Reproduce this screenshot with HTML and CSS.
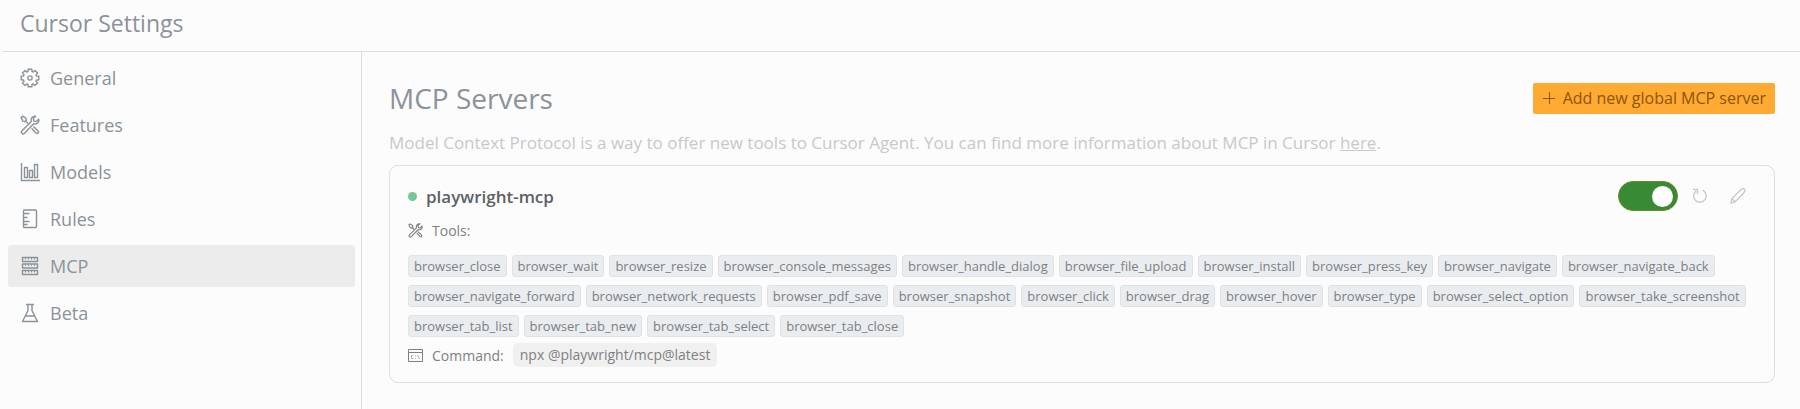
FILE: index.html
```html
<!DOCTYPE html>
<html lang="en">
<head>
    <meta charset="UTF-8">
    <meta name="viewport" content="width=device-width, initial-scale=1.0">
    <title>Cursor Settings</title>
    <link rel="stylesheet" href="styles.css">
</head>
<body>
    <header class="header">
        <h1>Cursor Settings</h1>
    </header>

    <div class="layout">
        <nav class="sidebar">
            <a href="#general" class="nav-item">
                <svg class="nav-icon" viewBox="0 0 20 20">
                    <path d="M8.1 1.2h3.8L12 3.5l1.2.5 1.7-1.55 2.65 2.65L16 6.8l.5 1.2 2.3.1v3.8l-2.3.1-.5 1.2 1.55 1.7-2.65 2.65L13.2 16l-1.2.5-.1 2.3H8.1L8 16.5 6.8 16l-1.7 1.55-2.65-2.65L4 13.2 3.5 12l-2.3-.1V8.1L3.5 8 4 6.8 2.45 5.1 5.1 2.45 6.8 4 8 3.5z"></path>
                    <circle cx="10" cy="10" r="2.1"></circle>
                </svg>
                <span>General</span>
            </a>
            <a href="#features" class="nav-item">
                <svg class="nav-icon" viewBox="0 0 20 20">
                    <path d="M15.7 1.2l-2.3 2.3.4 2.6 2.6.4 2.3-2.3c.7 2.6-1.2 4.8-3.5 4.8-.6 0-1-.1-1.5-.3L4.5 18.2c-.8.8-1.9.8-2.6.1-.7-.7-.7-1.8.1-2.6l9.3-9.2c-.9-3 1.5-5.8 4.4-5.3z"></path>
                    <path d="M1.2 2.6l1.4-1.4 3.2 1.9.6 2-1.6 1.6-2-.6zM5.7 6l2.8 2.8M11.6 13.3l4.5 4.8c.6.6 1.5.5 2 0s.6-1.4 0-2l-4.7-4.6"></path>
                </svg>
                <span>Features</span>
            </a>
            <a href="#models" class="nav-item">
                <svg class="nav-icon" viewBox="0 0 20 20">
                    <path d="M1.5 1v17.5H20M4.5 5.5h3v10h-3zM9.5 8.5h3v7h-3zM14.5 2.5h3v13h-3z"></path>
                </svg>
                <span>Models</span>
            </a>
            <a href="#rules" class="nav-item">
                <svg class="nav-icon" viewBox="0 0 20 20">
                    <rect x="3.5" y="1" width="13" height="17.5" rx="1"></rect>
                    <path d="M3.5 4.5h6M3.5 8.5h4M3.5 12.5h6M3.5 15.5h4"></path>
                </svg>
                <span>Rules</span>
            </a>
            <a href="#mcp" class="nav-item active">
                <svg class="nav-icon" viewBox="0 0 20 20">
                    <path d="M2.5 1.5h15v4h-15zM2.5 8h15v4h-15zM2.5 14.5h15v4h-15z"></path>
                    <path class="ticks" d="M5.5 2v1.5M8.5 2v1.5M11.5 2v1.5M14.5 2v1.5M5.5 8.5V10M8.5 8.5V10M11.5 8.5V10M14.5 8.5V10M5.5 15v1.5M8.5 15v1.5M11.5 15v1.5M14.5 15v1.5"></path>
                </svg>
                <span>MCP</span>
            </a>
            <a href="#beta" class="nav-item">
                <svg class="nav-icon" viewBox="0 0 20 20">
                    <path d="M6 1.5h8M8 1.5v6L2.5 18.5h15L12 7.5v-6M5.5 13h9"></path>
                </svg>
                <span>Beta</span>
            </a>
        </nav>

        <main class="content">
            <div class="content-header">
                <h2>MCP Servers</h2>
                <button type="button" class="add-button">
                    <svg class="add-icon" viewBox="0 0 14 14">
                        <path d="M7.5 1v12M1 7.5h12"></path>
                    </svg>
                    <span>Add new global MCP server</span>
                </button>
            </div>
            <p class="description">Model Context Protocol is a way to offer new tools to Cursor Agent. You can find more information about MCP in Cursor <a href="#docs">here</a>.</p>

            <section class="server-card">
                <div class="server-header">
                    <span class="status-dot"></span>
                    <h3>playwright-mcp</h3>
                    <div class="server-actions">
                        <input type="checkbox" class="toggle" aria-label="Enable playwright-mcp" checked>
                        <button type="button" class="icon-button" aria-label="Refresh">
                            <svg viewBox="0 0 16 16">
                                <path d="M10.5 2.2a6.3 6.3 0 1 1-6.3.7M1 1.5h4.5V6"></path>
                            </svg>
                        </button>
                        <button type="button" class="icon-button" aria-label="Edit">
                            <svg viewBox="0 0 16 16">
                                <path d="M1 15l1-4.5L11.500 1c.9-.7 2-.6 2.8.1.9.9.9 2 .2 2.9L5.300 13.600zM2.300 10.700l2.800 2.800"></path>
                            </svg>
                        </button>
                    </div>
                </div>

                <div class="server-row">
                    <svg class="row-icon tools-icon" viewBox="0 0 20 20">
                        <path d="M15.7 1.2l-2.3 2.3.4 2.6 2.6.4 2.3-2.3c.7 2.6-1.2 4.8-3.5 4.8-.6 0-1-.1-1.5-.3L4.5 18.2c-.8.8-1.9.8-2.6.1-.7-.7-.7-1.8.1-2.6l9.3-9.2c-.9-3 1.5-5.8 4.4-5.3z"></path>
                        <path d="M1.2 2.6l1.4-1.4 3.2 1.9.6 2-1.6 1.6-2-.6zM5.7 6l2.8 2.8M11.6 13.3l4.5 4.8c.6.6 1.5.5 2 0s.6-1.4 0-2l-4.7-4.6"></path>
                    </svg>
                    <span>Tools:</span>
                </div>

                <ul class="tools-list">
                    <li>browser_close</li>
                    <li>browser_wait</li>
                    <li>browser_resize</li>
                    <li>browser_console_messages</li>
                    <li>browser_handle_dialog</li>
                    <li>browser_file_upload</li>
                    <li>browser_install</li>
                    <li>browser_press_key</li>
                    <li>browser_navigate</li>
                    <li>browser_navigate_back</li>
                    <li>browser_navigate_forward</li>
                    <li>browser_network_requests</li>
                    <li>browser_pdf_save</li>
                    <li>browser_snapshot</li>
                    <li>browser_click</li>
                    <li>browser_drag</li>
                    <li>browser_hover</li>
                    <li>browser_type</li>
                    <li>browser_select_option</li>
                    <li>browser_take_screenshot</li>
                    <li>browser_tab_list</li>
                    <li>browser_tab_new</li>
                    <li>browser_tab_select</li>
                    <li>browser_tab_close</li>
                </ul>

                <div class="server-row">
                    <svg class="row-icon" viewBox="0 0 15 15">
                        <path d="M.5 1.5h14v12H.5zM.5 4.5h14"></path>
                        <path class="thin" d="M5.3 7.5H3.5v3h1.8M7.5 7.5v1M7.5 10v1M9.5 7l2 4"></path>
                    </svg>
                    <span>Command:</span>
                    <code>npx @playwright/mcp@latest</code>
                </div>
            </section>
        </main>
    </div>
</body>
</html>
```
FILE: styles.css
```css
* {
    margin: 0;
    padding: 0;
    box-sizing: border-box;
}

body {
    font-family: 'Segoe UI', 'Open Sans', 'Noto Sans', sans-serif;
    background: #fcfcfc;
    color: #8b929a;
    min-height: 100vh;
    display: flex;
    flex-direction: column;
}

h1,
h2 {
    font-weight: 400;
}

svg {
    fill: none;
    stroke: currentColor;
    flex-shrink: 0;
}

.header {
    margin-left: 2px;
    padding: 7px 18px 12px;
    border-bottom: 1px solid #dedede;
}

.header h1 {
    font-size: 23px;
    line-height: 32px;
}

.layout {
    display: flex;
    flex: 1;
}

.sidebar {
    width: 362px;
    flex-shrink: 0;
    display: flex;
    flex-direction: column;
    gap: 5px;
    padding: 5px 6px 0 8px;
    border-right: 1px solid #dedede;
}

.nav-item {
    display: flex;
    align-items: center;
    gap: 10px;
    height: 42px;
    padding: 0 12px;
    border-radius: 3px;
    color: inherit;
    font-size: 18px;
    text-decoration: none;
}

.nav-item.active {
    background: #ececec;
}

.nav-icon {
    width: 20px;
    height: 20px;
    stroke-width: 1.4;
    stroke-linejoin: round;
}

.nav-icon .ticks {
    stroke-width: 1;
}

.content {
    flex: 1;
    min-width: 0;
    padding: 26px 25px 20px 27px;
}

.content-header {
    display: flex;
    align-items: center;
    justify-content: space-between;
}

.content-header h2 {
    font-size: 28px;
    line-height: 40px;
}

.add-button {
    display: flex;
    align-items: center;
    gap: 7px;
    height: 31px;
    padding: 0 9px;
    border: none;
    border-radius: 2px;
    background: #ffaa33;
    color: #8a5608;
    font-family: inherit;
    font-size: 16px;
    cursor: pointer;
}

.add-icon {
    width: 14px;
    height: 14px;
}

.description {
    margin: 13px 0 10px;
    color: #c5c9cd;
    font-size: 17px;
    line-height: 24px;
}

.description a {
    color: inherit;
}

.server-card {
    padding: 15px 18px;
    border: 1px solid #dedede;
    border-radius: 9px;
}

.server-header {
    display: flex;
    align-items: center;
    height: 30px;
}

.status-dot {
    width: 9px;
    height: 9px;
    margin-right: 9px;
    border-radius: 50%;
    background: #73c991;
}

.server-header h3 {
    color: #5c6166;
    font-size: 17px;
    font-weight: 600;
}

.server-actions {
    display: flex;
    align-items: center;
    gap: 14px;
    margin-left: auto;
    padding-right: 10px;
}

.toggle {
    appearance: none;
    width: 60px;
    height: 30px;
    padding: 4px;
    border: 1px solid #6b8a2a;
    border-radius: 15px;
    background: #388a34;
    cursor: pointer;
}

.toggle::before {
    content: '';
    display: block;
    width: 21px;
    height: 21px;
    border-radius: 50%;
    background: #fff;
}

.toggle:checked::before {
    margin-left: auto;
}

.icon-button {
    width: 16px;
    height: 16px;
    border: none;
    background: none;
    color: #c5c9cd;
    cursor: pointer;
}

.icon-button + .icon-button {
    margin-left: 8px;
}

.icon-button svg {
    display: block;
    stroke-width: 1.3;
}

.server-row {
    display: flex;
    align-items: center;
    gap: 9px;
    height: 24px;
    color: #7d8083;
    font-size: 14px;
}

.server-header + .server-row {
    margin-top: 7px;
}

.row-icon {
    width: 15px;
    height: 15px;
}

.row-icon.tools-icon {
    stroke-width: 1.5;
}

.row-icon .thin {
    stroke-width: 0.6;
}

.server-row code {
    padding: 0 7px;
    border-radius: 5px;
    background: #f0f0f0;
    font-family: inherit;
    line-height: 24px;
}

.tools-list {
    display: flex;
    flex-wrap: wrap;
    gap: 8px 5px;
    margin: 13px 0 6px;
    list-style: none;
}

.tools-list li {
    padding: 0 5px;
    border: 1px solid #dfe3e8;
    border-radius: 3px;
    background: #eaedf0;
    color: #7d8083;
    font-size: 13px;
    line-height: 20px;
}
```
